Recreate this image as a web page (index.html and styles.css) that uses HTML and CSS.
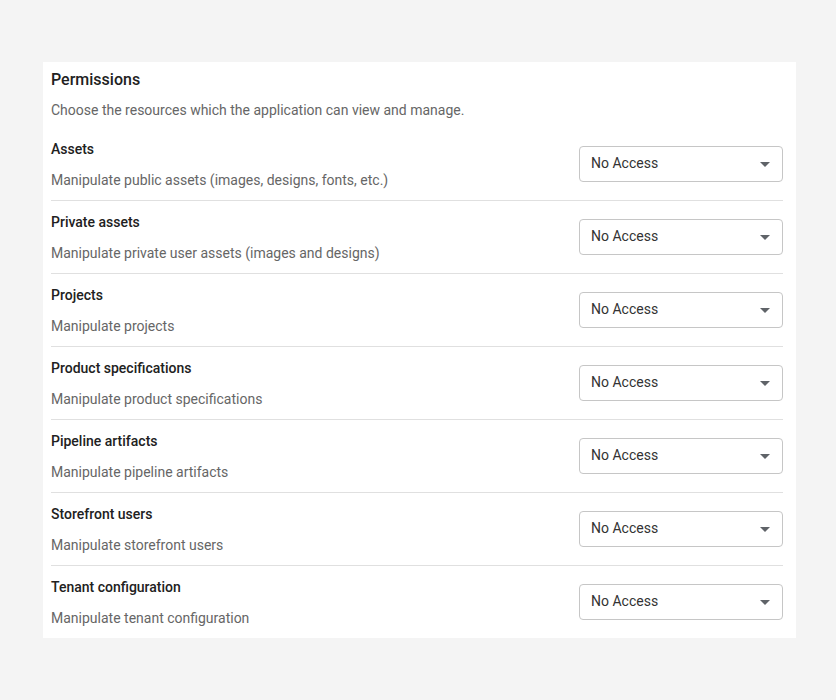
FILE: index.html
```html
<!DOCTYPE html>
<html lang="en">
<head>
    <meta charset="UTF-8">
    <meta name="viewport" content="width=device-width, initial-scale=1.0">
    <title>Permissions</title>
    <link rel="stylesheet" href="styles.css">
</head>
<body>
    <div class="card">
        <!-- Header -->
        <div class="header">
            <h2>Permissions</h2>
            <p>Choose the resources which the application can view and manage.</p>
        </div>

        <!-- Permission rows -->
        <div class="rows">
            <div class="row">
                <div class="info">
                    <div class="name">Assets</div>
                    <div class="desc">Manipulate public assets (images, designs, fonts, etc.)</div>
                </div>
                <div class="select"><span>No Access</span><i class="arrow"></i></div>
            </div>
            <div class="row">
                <div class="info">
                    <div class="name">Private assets</div>
                    <div class="desc">Manipulate private user assets (images and designs)</div>
                </div>
                <div class="select"><span>No Access</span><i class="arrow"></i></div>
            </div>
            <div class="row">
                <div class="info">
                    <div class="name">Projects</div>
                    <div class="desc">Manipulate projects</div>
                </div>
                <div class="select"><span>No Access</span><i class="arrow"></i></div>
            </div>
            <div class="row">
                <div class="info">
                    <div class="name">Product specifications</div>
                    <div class="desc">Manipulate product specifications</div>
                </div>
                <div class="select"><span>No Access</span><i class="arrow"></i></div>
            </div>
            <div class="row">
                <div class="info">
                    <div class="name">Pipeline artifacts</div>
                    <div class="desc">Manipulate pipeline artifacts</div>
                </div>
                <div class="select"><span>No Access</span><i class="arrow"></i></div>
            </div>
            <div class="row">
                <div class="info">
                    <div class="name">Storefront users</div>
                    <div class="desc">Manipulate storefront users</div>
                </div>
                <div class="select"><span>No Access</span><i class="arrow"></i></div>
            </div>
            <div class="row">
                <div class="info">
                    <div class="name">Tenant configuration</div>
                    <div class="desc">Manipulate tenant configuration</div>
                </div>
                <div class="select"><span>No Access</span><i class="arrow"></i></div>
            </div>
        </div>
    </div>
</body>
</html>
```

FILE: styles.css
```css
body {
    font-family: Roboto, "Liberation Sans", sans-serif;
    margin: 0;
    padding: 62px 40px 0 43px;
    background-color: #f4f4f4;
    color: #212121;
}
.card {
    background-color: #fff;
    padding: 0 13px 0 8px;
}
.header {
    padding-top: 6px;
}
.header h2 {
    margin: 0;
    font-size: 16px;
    font-weight: 500;
    line-height: 24px;
    color: #212121;
}
.header p {
    margin: 8px 0 8px;
    font-size: 14px;
    line-height: 20px;
    color: #666;
}
.row {
    display: flex;
    align-items: center;
    justify-content: space-between;
    padding: 10px 0;
    border-bottom: 1px solid #e0e0e0;
}
.row:last-child {
    border-bottom: none;
}
.info {
    padding-top: 1px;
}
.name {
    font-size: 14px;
    font-weight: 500;
    line-height: 20px;
    color: #212121;
}
.desc {
    margin-top: 11px;
    font-size: 14px;
    line-height: 20px;
    color: #666;
}
.select {
    display: flex;
    align-items: center;
    justify-content: space-between;
    box-sizing: border-box;
    width: 204px;
    height: 36px;
    padding: 0 12px 0 11px;
    border: 1px solid #c6c6c6;
    border-radius: 4px;
    font-size: 14px;
    color: #333;
}
.select span {
    padding-bottom: 2px;
}
.arrow {
    width: 0;
    height: 0;
    border-left: 5px solid transparent;
    border-right: 5px solid transparent;
    border-top: 5px solid #5f6368;
}
```
